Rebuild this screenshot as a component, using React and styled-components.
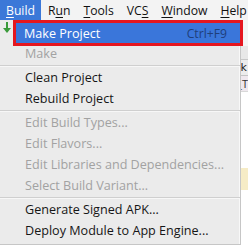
import React from 'react'
import styled, { createGlobalStyle } from 'styled-components'

const GlobalStyle = createGlobalStyle`
    html, body {
        margin: 0;
        padding: 0;
        width: 248px;
        height: 249px;
        overflow: hidden;
        background: #ffffff;
    }
    * {
        box-sizing: border-box;
    }
`

const menus = [
    { label: 'Build', key: 0, active: true },
    { label: 'Run', key: 1 },
    { label: 'Tools', key: 0 },
    { label: 'VCS', key: 2 },
    { label: 'Window', key: 0 },
    { label: 'Help', key: 0 },
]

const groups = [
    [
        { label: 'Make Project', shortcut: 'Ctrl+F9', selected: true, icon: true },
        { label: 'Make', disabled: true },
    ],
    [
        { label: 'Clean Project' },
        { label: 'Rebuild Project' },
    ],
    [
        { label: 'Edit Build Types...', disabled: true },
        { label: 'Edit Flavors...', disabled: true },
        { label: 'Edit Libraries and Dependencies...', disabled: true },
        { label: 'Select Build Variant...', disabled: true },
    ],
    [
        { label: 'Generate Signed APK...' },
        { label: 'Deploy Module to App Engine...' },
    ],
]

const Mnemonic = ({ text, index }) => (
    <>
        {text.slice(0, index)}
        <u>{text[index]}</u>
        {text.slice(index + 1)}
    </>
)

const BuildIcon = () => (
    <svg width="8" height="12" viewBox="0 0 8 12">
        <rect x="3" y="0" width="2" height="7" fill="#3a9a3a" />
        <path d="M0 6 L8 6 L4 11 Z" fill="#3a9a3a" />
    </svg>
)

const App = () => {
    return (
        <Page>
            <GlobalStyle />
            <MenuBar>
                {menus.map((m) => (
                    <MenuTitle key={m.label} active={m.active}>
                        <Mnemonic text={m.label} index={m.key} />
                    </MenuTitle>
                ))}
            </MenuBar>
            <Workspace>
                <BlankStrip />
                <ToolStrip />
                <TabStrip>lk</TabStrip>
                <PathStrip>_T</PathStrip>
                <Editor>
                    <Notice />
                </Editor>
            </Workspace>

            <Popup>
                {groups.map((group, gi) => (
                    <React.Fragment key={gi}>
                        {gi > 0 && <Separator />}
                        {group.map((item) =>
                            item.selected ? (
                                <SelectedRow key={item.label}>
                                    <Gutter>{item.icon && <BuildIcon />}</Gutter>
                                    <Marked>
                                        <ItemLabel selected>{item.label}</ItemLabel>
                                        <Shortcut>{item.shortcut}</Shortcut>
                                    </Marked>
                                </SelectedRow>
                            ) : (
                                <Row key={item.label}>
                                    <ItemLabel disabled={item.disabled}>{item.label}</ItemLabel>
                                </Row>
                            )
                        )}
                    </React.Fragment>
                ))}
            </Popup>
        </Page>
    )
}

export default App

const Page = styled.div`
    position: relative;
    width: 248px;
    height: 249px;
    display: flex;
    flex-direction: column;
    font-family: "Open Sans", "Noto Sans", sans-serif;
    overflow: hidden;
`

const MenuBar = styled.div`
    height: 20px;
    display: flex;
    align-items: stretch;
    gap: 1px;
    background: #f3f3f3;
    font-size: 12.2px;
    color: #111111;
    white-space: nowrap;
`

const MenuTitle = styled.div`
    display: flex;
    align-items: center;
    padding: 0 6px;
    background: ${(p) => (p.active ? '#3b78d8' : 'transparent')};
    color: ${(p) => (p.active ? '#ffffff' : '#111111')};

    u {
        text-decoration-thickness: 1px;
        text-underline-offset: 2px;
    }
`

const Workspace = styled.div`
    flex: 1;
    display: flex;
    flex-direction: column;
    background: #ffffff;
`

const BlankStrip = styled.div`
    height: 26px;
    background: #f4f4f4;
`

const ToolStrip = styled.div`
    height: 14px;
    background: #e8e8e8;
    border-bottom: 1px solid #c8c8c8;
`

const TabStrip = styled.div`
    height: 16px;
    background: #ececec;
    border-bottom: 1px solid #c4c4c4;
    font-size: 11px;
    line-height: 15px;
    color: #222;
    text-align: right;
    padding-right: 1px;
    font-family: "DejaVu Sans", sans-serif;
`

const PathStrip = styled.div`
    height: 16px;
    background: #efe8ee;
    font-size: 11px;
    line-height: 15px;
    color: #333;
    text-align: right;
    padding-right: 0;
    border-bottom: 1px solid #d8d8d8;
`

const Editor = styled.div`
    flex: 1;
    padding-top: 76px;
`

const Notice = styled.div`
    height: 22px;
    background: #f6ecc6;
`

const Popup = styled.div`
    position: absolute;
    top: 20px;
    left: 0;
    width: 241px;
    padding: 2px 0 3px;
    background: #ebebeb;
    border-right: 1px solid #c6c6c6;
    border-bottom: 1px solid #c6c6c6;
    box-shadow: inset -6px 0 0 -5px #f8f8f8;
`

const Row = styled.div`
    height: 21px;
    display: flex;
    align-items: center;
    padding-left: 25px;
    font-size: 12.6px;
    white-space: nowrap;
`

const SelectedRow = styled.div`
    position: relative;
    z-index: 1;
    height: 26px;
    margin: -2px 0 -3px 0;
    display: flex;
    align-items: stretch;
`

const Gutter = styled.div`
    width: 13px;
    display: flex;
    align-items: flex-start;
    justify-content: center;
    padding-top: 2px;
`

const Marked = styled.div`
    flex: 1;
    margin-right: -3px;
    border: 3.5px solid #e5161f;
    background: #3a76da;
    display: flex;
    align-items: center;
    justify-content: space-between;
    padding: 0 13px 0 8px;
    font-size: 12.6px;
    white-space: nowrap;
`

const ItemLabel = styled.span`
    color: ${(p) => (p.selected ? '#ffffff' : p.disabled ? '#a2a2a2' : '#161616')};
`

const Shortcut = styled.span`
    color: #1f3f7a;
    font-size: 12.2px;
`

const Separator = styled.div`
    margin: 1px 0;
    height: 1px;
    background: #cfcfcf;
    box-shadow: 0 1px 0 #f7f7f7;
`
